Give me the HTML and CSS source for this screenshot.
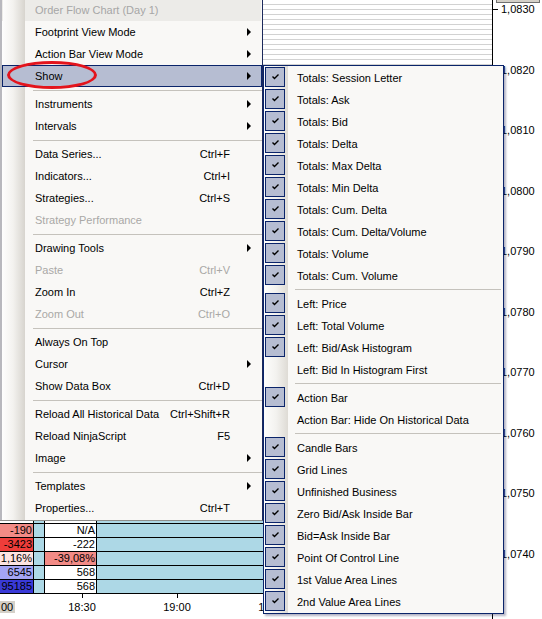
FILE: index.html
```html
<!DOCTYPE html>
<html>
<head>
<meta charset="utf-8">
<link rel="stylesheet" href="styles.css">
</head>
<body>
<div class="screen">
  <div class="chart">
    <div class="plot-col">
      <div class="plot"></div>
      <div class="table">
        <div class="trow strip"><div class="c c1"></div><div class="c c2"></div><div class="c c3"></div><div class="c c4"></div></div>
        <div class="trow"><div class="c c1 red1">-190</div><div class="c c2"></div><div class="c c3">N/A</div><div class="c c4"></div></div>
        <div class="trow"><div class="c c1 red2">-3423</div><div class="c c2"></div><div class="c c3">-222</div><div class="c c4"></div></div>
        <div class="trow"><div class="c c1 pink">1,16%</div><div class="c c2"></div><div class="c c3 red1">-39,08%</div><div class="c c4"></div></div>
        <div class="trow"><div class="c c1 blue1">6545</div><div class="c c2"></div><div class="c c3">568</div><div class="c c4"></div></div>
        <div class="trow"><div class="c c1 blue2">95185</div><div class="c c2"></div><div class="c c3">568</div><div class="c c4"></div></div>
      </div>
      <div class="time-axis">
        <span class="tcur">00</span>
        <span class="tick first">18:30</span>
        <span class="tick">19:00</span>
        <span class="tick">19:30</span>
      </div>
    </div>
    <div class="price-axis">
      <div class="ptag"></div>
      <div class="plabel">1,0830</div>
      <div class="plabel">1,0820</div>
      <div class="plabel">1,0810</div>
      <div class="plabel">1,0800</div>
      <div class="plabel">1,0790</div>
      <div class="plabel">1,0780</div>
      <div class="plabel">1,0770</div>
      <div class="plabel">1,0760</div>
      <div class="plabel">1,0750</div>
      <div class="plabel">1,0740</div>
    </div>
  </div>

  <div class="menu main">
    <div class="item title"><span class="label">Order Flow Chart (Day 1)</span></div>
    <div class="item"><span class="label">Footprint View Mode</span><span class="slot"><i class="arrow"></i></span></div>
    <div class="item"><span class="label">Action Bar View Mode</span><span class="slot"><i class="arrow"></i></span></div>
    <div class="item hl"><span class="label">Show</span><span class="slot"><i class="arrow"></i></span></div>
    <div class="sep"></div>
    <div class="item"><span class="label">Instruments</span><span class="slot"><i class="arrow"></i></span></div>
    <div class="item"><span class="label">Intervals</span><span class="slot"><i class="arrow"></i></span></div>
    <div class="sep"></div>
    <div class="item"><span class="label">Data Series...</span><span class="key">Ctrl+F</span><span class="slot"></span></div>
    <div class="item"><span class="label">Indicators...</span><span class="key">Ctrl+I</span><span class="slot"></span></div>
    <div class="item"><span class="label">Strategies...</span><span class="key">Ctrl+S</span><span class="slot"></span></div>
    <div class="item dis"><span class="label">Strategy Performance</span><span class="slot"></span></div>
    <div class="sep"></div>
    <div class="item"><span class="label">Drawing Tools</span><span class="slot"><i class="arrow"></i></span></div>
    <div class="item dis"><span class="label">Paste</span><span class="key">Ctrl+V</span><span class="slot"></span></div>
    <div class="item"><span class="label">Zoom In</span><span class="key">Ctrl+Z</span><span class="slot"></span></div>
    <div class="item dis"><span class="label">Zoom Out</span><span class="key">Ctrl+O</span><span class="slot"></span></div>
    <div class="sep"></div>
    <div class="item"><span class="label">Always On Top</span><span class="slot"></span></div>
    <div class="item"><span class="label">Cursor</span><span class="slot"><i class="arrow"></i></span></div>
    <div class="item"><span class="label">Show Data Box</span><span class="key">Ctrl+D</span><span class="slot"></span></div>
    <div class="sep"></div>
    <div class="item"><span class="label">Reload All Historical Data</span><span class="key">Ctrl+Shift+R</span><span class="slot"></span></div>
    <div class="item"><span class="label">Reload NinjaScript</span><span class="key">F5</span><span class="slot"></span></div>
    <div class="item"><span class="label">Image</span><span class="slot"><i class="arrow"></i></span></div>
    <div class="sep"></div>
    <div class="item"><span class="label">Templates</span><span class="slot"><i class="arrow"></i></span></div>
    <div class="item"><span class="label">Properties...</span><span class="key">Ctrl+T</span><span class="slot"></span></div>
  </div>

  <div class="menu sub">
    <div class="sitem"><span class="cb"><svg width="7" height="6" viewBox="0 0 7 6"><polyline points="0.5,2.5 2.5,4.5 6.5,0.5"/></svg></span><span class="stext">Totals: Session Letter</span></div>
    <div class="sitem"><span class="cb"><svg width="7" height="6" viewBox="0 0 7 6"><polyline points="0.5,2.5 2.5,4.5 6.5,0.5"/></svg></span><span class="stext">Totals: Ask</span></div>
    <div class="sitem"><span class="cb"><svg width="7" height="6" viewBox="0 0 7 6"><polyline points="0.5,2.5 2.5,4.5 6.5,0.5"/></svg></span><span class="stext">Totals: Bid</span></div>
    <div class="sitem"><span class="cb"><svg width="7" height="6" viewBox="0 0 7 6"><polyline points="0.5,2.5 2.5,4.5 6.5,0.5"/></svg></span><span class="stext">Totals: Delta</span></div>
    <div class="sitem"><span class="cb"><svg width="7" height="6" viewBox="0 0 7 6"><polyline points="0.5,2.5 2.5,4.5 6.5,0.5"/></svg></span><span class="stext">Totals: Max Delta</span></div>
    <div class="sitem"><span class="cb"><svg width="7" height="6" viewBox="0 0 7 6"><polyline points="0.5,2.5 2.5,4.5 6.5,0.5"/></svg></span><span class="stext">Totals: Min Delta</span></div>
    <div class="sitem"><span class="cb"><svg width="7" height="6" viewBox="0 0 7 6"><polyline points="0.5,2.5 2.5,4.5 6.5,0.5"/></svg></span><span class="stext">Totals: Cum. Delta</span></div>
    <div class="sitem"><span class="cb"><svg width="7" height="6" viewBox="0 0 7 6"><polyline points="0.5,2.5 2.5,4.5 6.5,0.5"/></svg></span><span class="stext">Totals: Cum. Delta/Volume</span></div>
    <div class="sitem"><span class="cb"><svg width="7" height="6" viewBox="0 0 7 6"><polyline points="0.5,2.5 2.5,4.5 6.5,0.5"/></svg></span><span class="stext">Totals: Volume</span></div>
    <div class="sitem"><span class="cb"><svg width="7" height="6" viewBox="0 0 7 6"><polyline points="0.5,2.5 2.5,4.5 6.5,0.5"/></svg></span><span class="stext">Totals: Cum. Volume</span></div>
    <div class="ssep"></div>
    <div class="sitem"><span class="cb"><svg width="7" height="6" viewBox="0 0 7 6"><polyline points="0.5,2.5 2.5,4.5 6.5,0.5"/></svg></span><span class="stext">Left: Price</span></div>
    <div class="sitem"><span class="cb"><svg width="7" height="6" viewBox="0 0 7 6"><polyline points="0.5,2.5 2.5,4.5 6.5,0.5"/></svg></span><span class="stext">Left: Total Volume</span></div>
    <div class="sitem"><span class="cb"><svg width="7" height="6" viewBox="0 0 7 6"><polyline points="0.5,2.5 2.5,4.5 6.5,0.5"/></svg></span><span class="stext">Left: Bid/Ask Histogram</span></div>
    <div class="sitem"><span class="cb off"></span><span class="stext">Left: Bid In Histogram First</span></div>
    <div class="ssep"></div>
    <div class="sitem"><span class="cb"><svg width="7" height="6" viewBox="0 0 7 6"><polyline points="0.5,2.5 2.5,4.5 6.5,0.5"/></svg></span><span class="stext">Action Bar</span></div>
    <div class="sitem"><span class="cb off"></span><span class="stext">Action Bar: Hide On Historical Data</span></div>
    <div class="ssep"></div>
    <div class="sitem"><span class="cb"><svg width="7" height="6" viewBox="0 0 7 6"><polyline points="0.5,2.5 2.5,4.5 6.5,0.5"/></svg></span><span class="stext">Candle Bars</span></div>
    <div class="sitem"><span class="cb"><svg width="7" height="6" viewBox="0 0 7 6"><polyline points="0.5,2.5 2.5,4.5 6.5,0.5"/></svg></span><span class="stext">Grid Lines</span></div>
    <div class="sitem"><span class="cb"><svg width="7" height="6" viewBox="0 0 7 6"><polyline points="0.5,2.5 2.5,4.5 6.5,0.5"/></svg></span><span class="stext">Unfinished Business</span></div>
    <div class="sitem"><span class="cb"><svg width="7" height="6" viewBox="0 0 7 6"><polyline points="0.5,2.5 2.5,4.5 6.5,0.5"/></svg></span><span class="stext">Zero Bid/Ask Inside Bar</span></div>
    <div class="sitem"><span class="cb"><svg width="7" height="6" viewBox="0 0 7 6"><polyline points="0.5,2.5 2.5,4.5 6.5,0.5"/></svg></span><span class="stext">Bid=Ask Inside Bar</span></div>
    <div class="sitem"><span class="cb"><svg width="7" height="6" viewBox="0 0 7 6"><polyline points="0.5,2.5 2.5,4.5 6.5,0.5"/></svg></span><span class="stext">Point Of Control Line</span></div>
    <div class="sitem"><span class="cb"><svg width="7" height="6" viewBox="0 0 7 6"><polyline points="0.5,2.5 2.5,4.5 6.5,0.5"/></svg></span><span class="stext">1st Value Area Lines</span></div>
    <div class="sitem"><span class="cb"><svg width="7" height="6" viewBox="0 0 7 6"><polyline points="0.5,2.5 2.5,4.5 6.5,0.5"/></svg></span><span class="stext">2nd Value Area Lines</span></div>
  </div>

  <div class="ellipse"></div>
</div>
</body>
</html>
```

FILE: styles.css
```css
* { box-sizing: border-box; }
html, body { margin: 0; padding: 0; }
body {
  width: 542px;
  height: 619px;
  overflow: hidden;
  background: #fff;
  color: #000;
  font-family: "Liberation Sans", Arial, sans-serif;
  font-size: 11px;
}
.screen { position: relative; width: 542px; height: 619px; overflow: hidden; }

/* ---------- chart background ---------- */
.chart { display: flex; height: 619px; }
.plot-col { width: 492px; display: flex; flex-direction: column; }
.plot {
  height: 520px;
  background: #fff repeating-linear-gradient(to bottom, transparent 0 4px, #d2d2d2 4px 5px);
}
.table { display: flex; flex-direction: column; }
.trow { display: flex; height: 14px; border-bottom: 1px solid #000; }
.trow.strip { height: 4px; }
.c {
  border-right: 1px solid #000;
  line-height: 13px;
  padding-right: 1px;
  display: flex;
  justify-content: flex-end;
  white-space: nowrap;
  overflow: hidden;
  background: #fff;
}
.c1 { width: 34px; }
.c2 { width: 11px; background: #add8e6; }
.c3 { width: 52px; }
.c4 { flex: 1; background: #add8e6; border-right: 0; }
.red1 { background: #f28b86; }
.red2 { background: #ee3d3a; }
.pink { background: #fde3e1; }
.blue1 { background: #a4a4f4; }
.blue2 { background: #3a3ad8; }

.time-axis { height: 25px; display: flex; background: #fff; }
.tcur {
  width: 15px;
  height: 12px;
  margin-top: 7px;
  background: #d4d0c8;
  line-height: 12px;
  padding-left: 1px;
}
.tick {
  width: 95px;
  flex: none;
  text-align: center;
  padding-top: 7px;
  line-height: 12px;
  position: relative;
}
.tick.first { margin-left: 19.5px; }
.tick::before {
  content: "";
  position: absolute;
  top: 0;
  left: 47px;
  width: 1px;
  height: 4px;
  background: #000;
}

.price-axis {
  width: 50px;
  border-left: 1px solid #000;
  padding-top: 3px;
  display: flex;
  flex-direction: column;
  position: relative;
  background: #fff;
}
.ptag {
  position: absolute;
  left: 3px;
  top: -10px;
  width: 44px;
  height: 13px;
  background: #d4d0c8;
  border: 1px solid #707070;
}
.plabel {
  height: 60.5px;
  flex: none;
  line-height: 13px;
  display: flex;
  align-items: flex-start;
}
.plabel::before {
  content: "";
  width: 5px;
  height: 1px;
  margin-top: 6px;
  margin-right: 3px;
  background: #000;
}

/* ---------- menus ---------- */
.menu { position: absolute; background-color: #f9f8f6; }
.main {
  left: 0;
  top: -3px;
  width: 263px;
  padding: 2px 0 1px 2px;
  border-right: 1px solid #1c2a5c;
  border-bottom: 1px solid #8f8e8b;
  background-image: linear-gradient(to right, #b8b8be 0, #b8b8be 2px, #fefefe 2px, #f3f2ef 13px, #d7d4ce 25px, transparent 25px);
}
.item {
  height: 22px;
  display: flex;
  align-items: center;
  border: 1px solid transparent;
  white-space: nowrap;
}
.item .label { flex: 1; padding-left: 32px; }
.item .key { text-align: right; }
.item .slot { width: 31px; flex: none; display: flex; align-items: center; padding-left: 17px; }
.arrow {
  display: block;
  width: 0;
  height: 0;
  border-left: 4px solid #000;
  border-top: 4px solid transparent;
  border-bottom: 4px solid transparent;
}
.item.title {
  color: #a6a6a6;
  background: linear-gradient(to right, transparent 22px, #ecebe8 22px);
}
.item.dis { color: #a9a8a6; }
.item.hl { background: #b6bdd2; border-color: #0a246a; }
.sep { height: 6px; display: flex; align-items: center; padding-left: 31px; }
.sep::after { content: ""; flex: 1; height: 1px; background: #c5c2bc; }

.sub {
  left: 263px;
  top: 65px;
  width: 241px;
  padding-bottom: 1px;
  border: 1px solid #0a246a;
  box-shadow: 2px 2px 2px rgba(40, 40, 90, 0.35);
  background-image: linear-gradient(to right, #fdfdfc 0, #f3f2ef 12px, #dedbd5 24px, transparent 24px);
}
.sitem { height: 22px; display: flex; align-items: center; white-space: nowrap; }
.cb {
  width: 20px;
  height: 20px;
  margin-left: 1px;
  flex: none;
  background: #b6bdd2;
  border: 1px solid #0a246a;
  display: flex;
  align-items: center;
  justify-content: center;
}
.cb svg { fill: none; stroke: #000; stroke-width: 1.4; }
.cb.off { visibility: hidden; }
.stext { margin-left: 12px; padding-top: 2px; }
.ssep { height: 6px; display: flex; align-items: center; padding-left: 31px; padding-right: 2px; }
.ssep::after { content: ""; flex: 1; height: 1px; background: #c5c2bc; }

.ellipse {
  position: absolute;
  left: 7px;
  top: 61px;
  width: 90px;
  height: 28px;
  border: 3px solid #e3141c;
  border-radius: 50%;
}
```
